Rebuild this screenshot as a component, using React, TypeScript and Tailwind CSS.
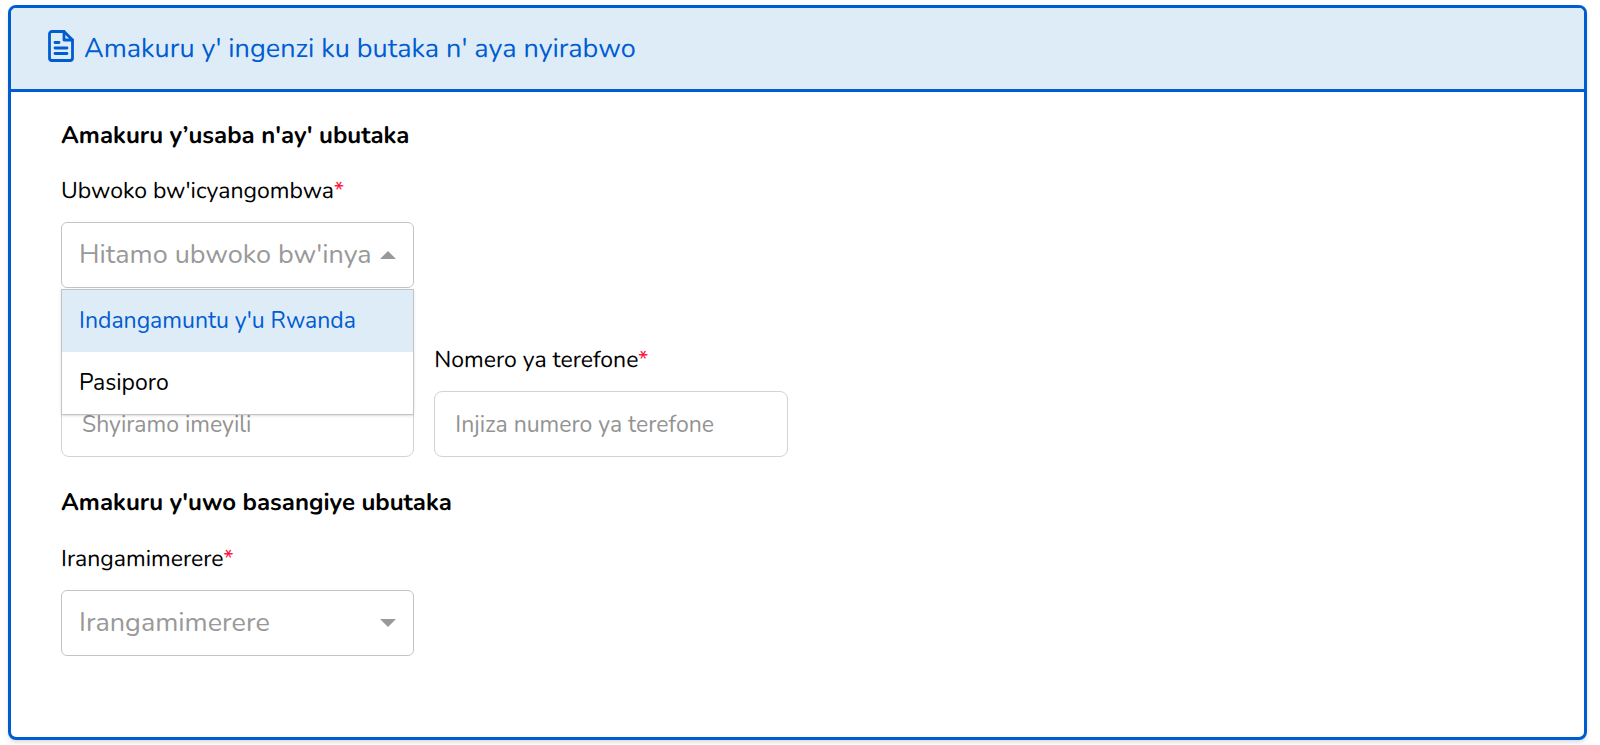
import { useState } from "react";
import type { InputHTMLAttributes, ReactNode } from "react";

const DOCUMENT_TYPES = ["Indangamuntu y'u Rwanda", "Pasiporo"];

function DocumentIcon() {
  return (
    <svg
      className="mb-1.5 h-8 w-[26px] shrink-0"
      viewBox="0 0 26 32"
      fill="none"
      stroke="currentColor"
      strokeWidth="2.8"
      strokeLinecap="round"
      strokeLinejoin="round"
      aria-hidden="true"
    >
      <path d="M16 1.5H4A2.5 2.5 0 0 0 1.5 4v24A2.5 2.5 0 0 0 4 30.5h18a2.5 2.5 0 0 0 2.5-2.5V10Z" />
      <path d="M16 1.5V10h8.5" />
      <path d="M7 12.5h4M7 18h12M7 23.5h12" />
    </svg>
  );
}

function Label({ htmlFor, children }: { htmlFor: string; children: ReactNode }) {
  return (
    <label htmlFor={htmlFor} className="text-[23px] leading-7 whitespace-nowrap">
      {children}
      <span className="text-[#ff1744]">*</span>
    </label>
  );
}

interface SelectFieldProps {
  id: string;
  label: string;
  placeholder: string;
  options?: string[];
  open?: boolean;
}

function SelectField({ id, label, placeholder, options = [], open = false }: SelectFieldProps) {
  const [value, setValue] = useState("");
  const [isOpen, setIsOpen] = useState(open);

  return (
    <div className="flex flex-col gap-4">
      <Label htmlFor={id}>{label}</Label>
      <div className="relative">
        <select
          id={id}
          value={value}
          onChange={(e) => setValue(e.target.value)}
          className="block h-[66px] w-full appearance-none rounded-md border border-[#c4c4c4] bg-white pr-[42px] pl-[17px] text-[27px] text-[#999999]"
        >
          <option value="">{placeholder}</option>
          {options.map((o) => (
            <option key={o}>{o}</option>
          ))}
        </select>
        <svg
          className="pointer-events-none absolute top-1/2 right-[18px] h-2 w-4 -translate-y-1/2 text-[#999999]"
          viewBox="0 0 16 8"
          fill="currentColor"
          aria-hidden="true"
        >
          <path d={isOpen ? "M0 8 8 0l8 8Z" : "M0 0h16L8 8Z"} />
        </svg>
        {isOpen && (
          <ul className="absolute inset-x-0 top-full z-10 mt-px border border-[#c4c4c4] bg-white shadow-sm">
            {options.map((o, i) => (
              <li key={o}>
                <button
                  type="button"
                  onClick={() => {
                    setValue(o);
                    setIsOpen(false);
                  }}
                  className={`block h-[62px] w-full px-[17px] text-left text-[23px] ${
                    i === 0 ? "bg-[#deecf8] text-[#005dd1]" : "text-black"
                  }`}
                >
                  {o}
                </button>
              </li>
            ))}
          </ul>
        )}
      </div>
    </div>
  );
}

function TextInput(props: InputHTMLAttributes<HTMLInputElement>) {
  return (
    <input
      {...props}
      className="block h-[66px] w-full rounded-lg border border-[#ced4da] bg-white px-5 text-[23px] text-black placeholder:text-[#939393]"
    />
  );
}

export default function App() {
  return (
    <main className="bg-white pt-[5px] pr-[13px] pb-1 pl-2 font-['Nunito','Lato',sans-serif] text-black [text-rendering:geometricPrecision]">
      <section className="overflow-hidden rounded-lg border-3 border-[#005dd1] bg-white shadow-md">
        <header className="flex h-[84px] items-center gap-2.5 border-b-3 border-[#005dd1] bg-[#deecf8] px-[37px] text-[#005dd1]">
          <DocumentIcon />
          <h1 className="text-[27px] leading-8">Amakuru y' ingenzi ku butaka n' aya nyirabwo</h1>
        </header>

        <form className="px-[50px] pt-7 pb-[81px]">
          <h2 className="text-[24px] leading-8 font-bold">Amakuru y’usaba n'ay' ubutaka</h2>
          <div className="mt-[26px] grid grid-cols-4 items-end gap-x-5 gap-y-[59px]">
            <SelectField
              id="document-type"
              label="Ubwoko bw'icyangombwa"
              placeholder="Hitamo ubwoko bw'inyandiko"
              options={DOCUMENT_TYPES}
              open
            />
            <div className="col-start-1">
              <TextInput type="email" aria-label="Imeyili" placeholder="Shyiramo imeyili" />
            </div>
            <div className="flex flex-col gap-4">
              <Label htmlFor="phone">Nomero ya terefone</Label>
              <TextInput id="phone" type="tel" placeholder="Injiza numero ya terefone" />
            </div>
          </div>

          <h2 className="mt-[30px] text-[24px] leading-8 font-bold">Amakuru y'uwo basangiye ubutaka</h2>
          <div className="mt-[27px] grid grid-cols-4 gap-x-5">
            <SelectField id="marital-status" label="Irangamimerere" placeholder="Irangamimerere" />
          </div>
        </form>
      </section>
    </main>
  );
}
